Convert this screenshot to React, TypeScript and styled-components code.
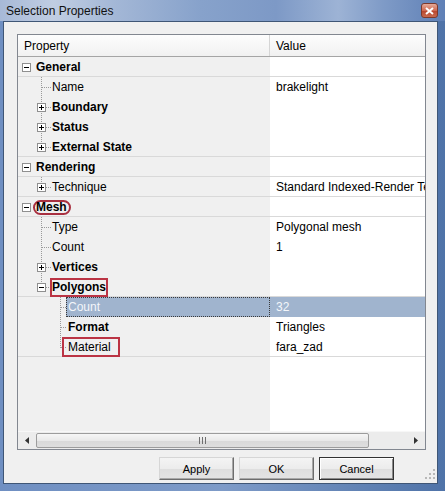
import React from 'react'
import styled, { createGlobalStyle } from 'styled-components'

const Global = createGlobalStyle`
  html, body {
    margin: 0;
    padding: 0;
    width: 445px;
    height: 491px;
    overflow: hidden;
    font-family: "Liberation Sans", Arial, sans-serif;
  }
`

const Window = styled.div`
  width: 445px;
  height: 491px;
  display: flex;
  flex-direction: column;
  background: linear-gradient(90deg, #6f8fc2 0%, #7e9bc8 50%, #4f73a8 100%);
`

const TitleBar = styled.div`
  height: 21px;
  flex: none;
  display: flex;
  align-items: center;
  justify-content: space-between;
  padding: 0 7px 0 6px;
  background: linear-gradient(
    90deg,
    #a7b9d7 0%,
    #c0cde2 12%,
    #a3b7d6 26%,
    #87a2cb 45%,
    #7d99c6 62%,
    #9db3d5 76%,
    #7f9bc7 86%,
    #5f80b6 100%
  );
`

const Title = styled.span`
  font-size: 12px;
  color: #111;
`

const CloseBtn = styled.div`
  width: 17px;
  height: 15px;
  box-sizing: border-box;
  border: 1px solid #7d3a2c;
  border-radius: 3px;
  background: linear-gradient(#e6aa98, #cf6a52 50%, #b8442c 51%, #c86a4f);
  display: flex;
  align-items: center;
  justify-content: center;
`

const Frame = styled.div`
  flex: 1;
  display: flex;
  padding: 0 7px 7px 3px;
`

const Client = styled.div`
  flex: 1;
  position: relative;
  display: flex;
  flex-direction: column;
  border: 1px solid #3f5676;
  background: #f0f0f0;
  padding: 12px 11px 3px 13px;
`

const List = styled.div`
  flex: 1;
  display: flex;
  flex-direction: column;
  border: 1px solid #828790;
  background: #fff;
  overflow: hidden;
`

const Header = styled.div`
  display: grid;
  grid-template-columns: 252px 1fr;
  height: 22px;
  box-sizing: border-box;
  border-bottom: 1px solid #a5a5a5;
  background: linear-gradient(#fdfdfd, #f1f1f1);
  font-size: 12px;
`

const HeaderCell = styled.div<{ $first?: boolean }>`
  display: flex;
  align-items: center;
  padding-left: 6px;
  border-right: ${p => (p.$first ? '1px solid #d5d5d5' : 'none')};
  box-sizing: border-box;
`

const Body = styled.div`
  flex: 1;
  background: linear-gradient(90deg, #f0f0f0 252px, #fff 252px);
`

const Row = styled.div<{ $divider?: boolean }>`
  display: grid;
  grid-template-columns: 252px 1fr;
  height: 20px;
  font-size: 12px;
  color: #000;
  box-shadow: ${p => (p.$divider ? 'inset 0 -1px #d9d9d9' : 'none')};
`

const PropCell = styled.div`
  display: flex;
  align-items: center;
  white-space: nowrap;
  overflow: hidden;
`

const Label = styled.span<{ $bold?: boolean; $selected?: boolean }>`
  font-weight: ${p => (p.$bold ? 700 : 400)};
  ${p =>
    p.$selected &&
    `
    flex: 1;
    align-self: stretch;
    display: flex;
    align-items: center;
    margin-left: -2px;
    padding-left: 2px;
    background: #a0b4ce;
    color: #f3f6fa;
    outline: 1px dotted #3a3a3a;
    outline-offset: -1px;
  `}
`

const Mark = styled.span<{ $shape: 'ellipse' | 'box'; $wide?: boolean }>`
  border: 2px solid #bb3444;
  ${p =>
    p.$shape === 'ellipse'
      ? `
    border-radius: 9px;
    line-height: 11px;
    padding: 0 2px 0 1px;
    margin-left: -3px;
    border-color: #a83040;
  `
      : p.$wide
      ? `
    line-height: 16px;
    padding: 0 7px 0 4px;
    margin-left: -6px;
  `
      : `
    line-height: 15px;
    padding: 0;
    margin-left: -2px;
  `}
`

const ValueCell = styled.div<{ $selected?: boolean }>`
  display: flex;
  align-items: center;
  padding-left: 6px;
  white-space: nowrap;
  overflow: hidden;
  background: ${p => (p.$selected ? '#a0b4ce' : 'transparent')};
  color: ${p => (p.$selected ? '#f3f6fa' : '#000')};
`

const Glyph = styled.svg`
  flex: none;
  display: block;
`

const HScroll = styled.div`
  height: 17px;
  flex: none;
  display: flex;
  background: #ececec;
  border-top: 1px solid #f7f7f7;
`

const Arrow = styled.div`
  width: 18px;
  display: flex;
  align-items: center;
  justify-content: center;
`

const Track = styled.div`
  flex: 1;
  display: flex;
  align-items: stretch;
  padding: 1px 0;
`

const Thumb = styled.div`
  width: 333px;
  box-sizing: border-box;
  border: 1px solid #9c9c9c;
  border-radius: 2px;
  background: linear-gradient(#f6f6f6, #e9e9e9 50%, #d9d9d9 51%, #dedede);
  display: flex;
  align-items: center;
  justify-content: center;
`

const ButtonRow = styled.div`
  display: flex;
  justify-content: flex-end;
  gap: 5px;
  margin-top: 7px;
  padding-right: 32px;
`

const Btn = styled.div<{ $default?: boolean }>`
  width: 75px;
  height: 23px;
  box-sizing: border-box;
  display: flex;
  align-items: center;
  justify-content: center;
  font-size: 11px;
  color: #000;
  background: linear-gradient(#f4f4f4, #ececec 50%, #dedede 51%, #e4e4e4);
  border: 1px solid;
  border-color: ${p => (p.$default ? '#333' : '#d6d6d6 #6d6d6d #6d6d6d #d6d6d6')};
  box-shadow: ${p => (p.$default ? 'inset 1px 1px #fff, inset -1px -1px #8a8a8a' : 'inset -1px -1px #a8a8a8')};
`

const Grip = styled.svg`
  position: absolute;
  right: 1px;
  bottom: 3px;
`

type Line = 'mid' | 'last'
type Exp = 'plus' | 'minus'

interface Item {
  level: 0 | 1 | 2
  label: string
  value?: string
  bold?: boolean
  exp?: Exp
  line?: Line
  divider?: boolean
  selected?: boolean
  mark?: 'ellipse' | 'box' | 'wide'
}

const items: Item[] = [
  { level: 0, label: 'General', bold: true, exp: 'minus', divider: true },
  { level: 1, label: 'Name', value: 'brakelight', line: 'mid' },
  { level: 1, label: 'Boundary', bold: true, exp: 'plus', line: 'mid' },
  { level: 1, label: 'Status', bold: true, exp: 'plus', line: 'mid' },
  { level: 1, label: 'External State', bold: true, exp: 'plus', line: 'last', divider: true },
  { level: 0, label: 'Rendering', bold: true, exp: 'minus', divider: true },
  { level: 1, label: 'Technique', value: 'Standard Indexed-Render Technique', exp: 'plus', line: 'last', divider: true },
  { level: 0, label: 'Mesh', bold: true, exp: 'minus', mark: 'ellipse', divider: true },
  { level: 1, label: 'Type', value: 'Polygonal mesh', line: 'mid' },
  { level: 1, label: 'Count', value: '1', line: 'mid' },
  { level: 1, label: 'Vertices', bold: true, exp: 'plus', line: 'mid' },
  { level: 1, label: 'Polygons', bold: true, exp: 'minus', line: 'last', mark: 'box', divider: true },
  { level: 2, label: 'Count', value: '32', line: 'mid', selected: true },
  { level: 2, label: 'Format', value: 'Triangles', bold: true, line: 'mid' },
  { level: 2, label: 'Material', value: 'fara_zad', line: 'last', mark: 'wide', divider: true },
]

const dots = { stroke: '#9a9a9a', strokeDasharray: '1 1', strokeWidth: 1 }

const TreeGlyph = ({ level, line, exp }: { level: 0 | 1 | 2; line?: Line; exp?: Exp }) => {
  const w = level === 0 ? 18 : level === 1 ? 34 : 50
  const cx = level === 0 ? 8.5 : level === 1 ? 23.5 : 42.5
  return (
    <Glyph width={w} height={20} viewBox={`0 0 ${w} 20`} shapeRendering="crispEdges">
      {level > 0 && (
        <>
          <line x1={cx} y1={0} x2={cx} y2={line === 'last' ? 11 : 20} {...dots} />
          <line x1={cx} y1={10.5} x2={w - 1} y2={10.5} {...dots} />
        </>
      )}
      {exp && (
        <>
          <rect x={cx - 4} y={6.5} width={8} height={8} fill="#fff" stroke="#8f8f8f" />
          <line x1={cx - 2.5} y1={10.5} x2={cx + 2.5} y2={10.5} stroke="#000" />
          {exp === 'plus' && <line x1={cx} y1={8} x2={cx} y2={13} stroke="#000" />}
        </>
      )}
    </Glyph>
  )
}

const TreeRow = ({ item }: { item: Item }) => {
  const text = <Label $bold={item.bold} $selected={item.selected}>{item.label}</Label>
  return (
    <Row $divider={item.divider}>
      <PropCell>
        <TreeGlyph level={item.level} line={item.line} exp={item.exp} />
        {item.mark ? (
          <Mark $shape={item.mark === 'ellipse' ? 'ellipse' : 'box'} $wide={item.mark === 'wide'}>
            {text}
          </Mark>
        ) : (
          text
        )}
      </PropCell>
      <ValueCell $selected={item.selected}>{item.value}</ValueCell>
    </Row>
  )
}

const App = () => (
  <Window>
    <Global />
    <TitleBar>
      <Title>Selection Properties</Title>
      <CloseBtn>
        <svg width="9" height="8" viewBox="0 0 9 8">
          <path d="M1 1 L8 7 M8 1 L1 7" stroke="#fff" strokeWidth="2" />
        </svg>
      </CloseBtn>
    </TitleBar>
    <Frame>
      <Client>
        <List>
          <Header>
            <HeaderCell $first>Property</HeaderCell>
            <HeaderCell>Value</HeaderCell>
          </Header>
          <Body>
            {items.map((it, i) => (
              <TreeRow key={i} item={it} />
            ))}
          </Body>
          <HScroll>
            <Arrow>
              <svg width="4" height="7" viewBox="0 0 4 7">
                <path d="M4 0 L0 3.5 L4 7 Z" fill="#333" />
              </svg>
            </Arrow>
            <Track>
              <Thumb>
                <svg width="8" height="7" viewBox="0 0 8 7" shapeRendering="crispEdges">
                  <path d="M0.5 0 V7 M3.5 0 V7 M6.5 0 V7" stroke="#6f6f6f" />
                </svg>
              </Thumb>
            </Track>
            <Arrow>
              <svg width="4" height="7" viewBox="0 0 4 7">
                <path d="M0 0 L4 3.5 L0 7 Z" fill="#333" />
              </svg>
            </Arrow>
          </HScroll>
        </List>
        <ButtonRow>
          <Btn>Apply</Btn>
          <Btn>OK</Btn>
          <Btn $default>Cancel</Btn>
        </ButtonRow>
        <Grip width="12" height="12" viewBox="0 0 12 12" shapeRendering="crispEdges">
          {[
            [9, 1],
            [9, 5],
            [5, 5],
            [9, 9],
            [5, 9],
            [1, 9],
          ].map(([x, y], i) => (
            <rect key={i} x={x} y={y} width={2} height={2} fill="#b8b8b8" />
          ))}
        </Grip>
      </Client>
    </Frame>
  </Window>
)

export default App
